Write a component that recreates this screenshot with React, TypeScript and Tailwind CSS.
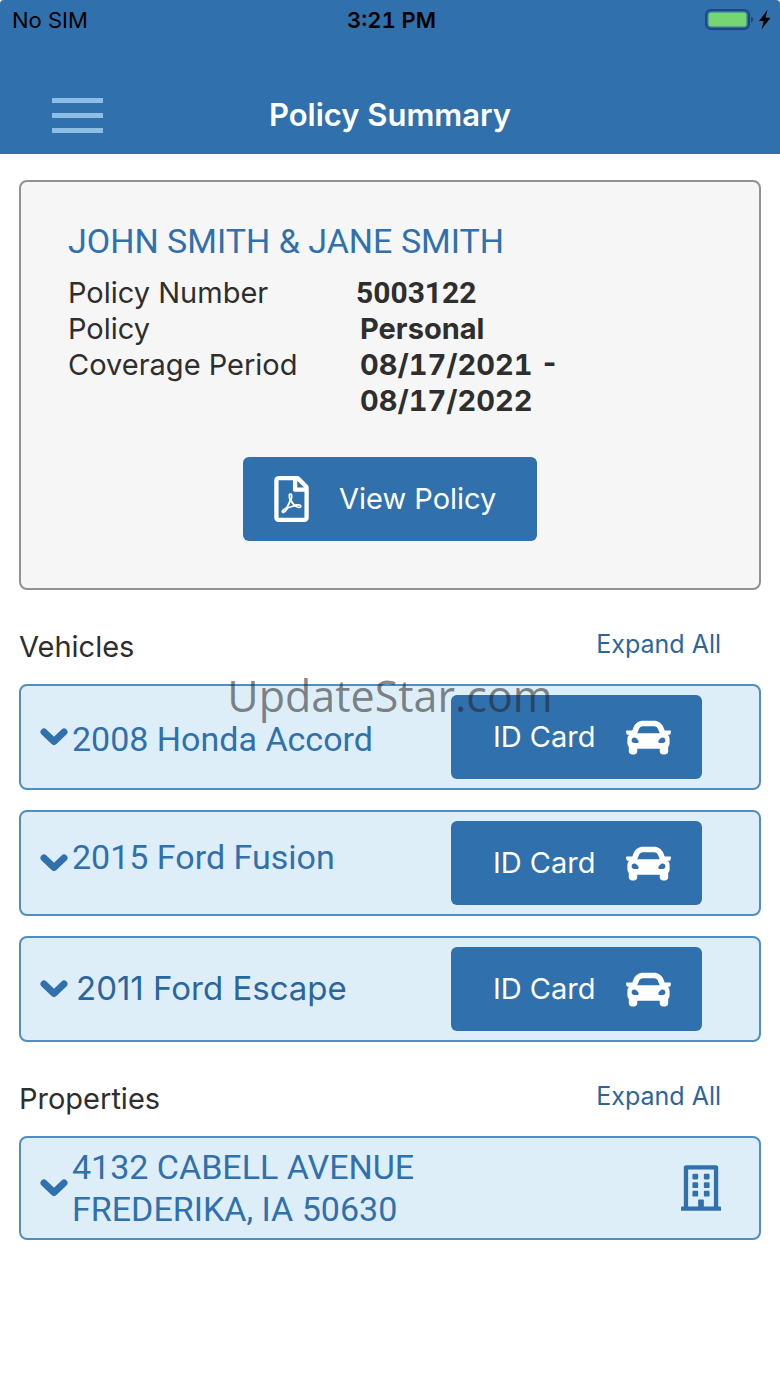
import { useState } from 'react';
import { FaCar, FaRegBuilding, FaRegFilePdf } from 'react-icons/fa';

interface Vehicle {
  id: number;
  name: string;
  nameClass: string;
}

const vehicles: Vehicle[] = [
  {
    id: 1,
    name: '2008 Honda Accord',
    nameClass: "pt-1 pl-1 font-['Roboto',sans-serif] text-[34px] text-[#3070ad]",
  },
  {
    id: 2,
    name: '2015 Ford Fusion',
    nameClass: "pb-3 pl-1 font-['Roboto',sans-serif] text-[34px] text-[#3070ad]",
  },
  { id: 3, name: '2011 Ford Escape', nameClass: 'pl-2 text-[33px] text-[#2a669e]' },
];

function Chevron() {
  return (
    <svg className="w-7 h-[18px] shrink-0" viewBox="0 0 28 18" fill="none" aria-hidden="true">
      <path
        d="M4 4 14 13.500 24 4"
        stroke="#3070ad"
        strokeWidth="7"
        strokeLinecap="round"
        strokeLinejoin="round"
      />
    </svg>
  );
}

function StatusBar() {
  return (
    <div className="flex items-center h-10 pl-3 pr-[9px] text-[22px] text-black">
      <span className="flex-1">No SIM</span>
      <span className="font-semibold tabular-nums">3:21 PM</span>
      <span className="flex flex-1 justify-end">
        <svg className="w-[66px] h-[22px]" viewBox="0 0 66 22" aria-label="Battery charging">
          <rect x="1" y="1" width="43" height="19" rx="5" fill="none" stroke="#1c4a78" strokeWidth="2" />
          <rect x="3.5" y="3.5" width="38" height="14" rx="2.5" fill="#76d672" />
          <path d="M46 7.500c3 1 3 5 0 6z" fill="#1c4a78" />
          <path d="M62.500 .8 54 12h4.700L56.500 20.500 65.500 8.800h-5z" fill="#000" />
        </svg>
      </span>
    </div>
  );
}

function Header() {
  return (
    <header className="bg-[#3070ad] rounded-t-sm h-[154px] flex flex-col justify-between">
      <StatusBar />
      <div className="grid grid-cols-[1fr_auto_1fr] items-center h-[78px] px-[52px]">
        <button type="button" aria-label="Menu" className="flex flex-col gap-[10px] w-[51px] cursor-pointer">
          <span className="h-[5px] bg-[#8dbfe6]" />
          <span className="h-[5px] bg-[#8dbfe6]" />
          <span className="h-[5px] bg-[#8dbfe6]" />
        </button>
        <h1 className="text-[31px] font-semibold text-white">Policy Summary</h1>
      </div>
    </header>
  );
}

function PolicyCard() {
  return (
    <section className="border-2 border-[#929292] rounded-lg bg-[#f6f6f6] pt-[39px] pb-[47px] px-[47px]">
      <h2 className="font-['Roboto',sans-serif] text-[34px] leading-10 text-[#3070ad]">
        JOHN SMITH &amp; JANE SMITH
      </h2>
      <dl className="grid grid-cols-[288px_204px] mt-[14px] text-[29px] leading-9 text-[#2e2e2e]">
        <dt>Policy Number</dt>
        <dd className="font-['Roboto',sans-serif] text-[30px] font-bold">5003122</dd>
        <dt>Policy</dt>
        <dd className="pl-1 font-bold">Personal</dd>
        <dt>Coverage Period</dt>
        <dd className="pl-1 font-bold tabular-nums">08/17/2021 - 08/17/2022</dd>
      </dl>
      <button
        type="button"
        className="flex items-center gap-[30px] w-[294px] h-[84px] mx-auto mt-[38px] pl-[31px] rounded-md bg-[#3070ad] text-[29px] text-white cursor-pointer"
      >
        <FaRegFilePdf className="w-[35px] h-[46px]" />
        View Policy
      </button>
    </section>
  );
}

function SectionHeader({ title, onExpand }: { title: string; onExpand: () => void }) {
  return (
    <div className="flex items-center justify-between h-[94px] pt-5 pr-10">
      <h2 className="text-[29px] text-[#2e2e2e]">{title}</h2>
      <button type="button" onClick={onExpand} className="pb-1 text-[25px] text-[#2a669e] cursor-pointer">
        Expand All
      </button>
    </div>
  );
}

function VehicleRow({ vehicle, open }: { vehicle: Vehicle; open: boolean }) {
  return (
    <li className="flex items-center justify-between h-[106px] border-2 border-[#4f8ebf] rounded-lg bg-[#deeef9] pl-[19px] pr-[57px]">
      <button type="button" aria-expanded={open} className="flex items-center cursor-pointer">
        <Chevron />
        <span className={vehicle.nameClass}>{vehicle.name}</span>
      </button>
      <button
        type="button"
        className="flex items-center justify-between w-[251px] h-[84px] pl-[42px] pr-[31px] rounded-md bg-[#3070ad] text-[29px] text-white cursor-pointer"
      >
        ID Card
        <FaCar className="w-[45px] h-[45px]" />
      </button>
    </li>
  );
}

function App() {
  const [vehiclesOpen, setVehiclesOpen] = useState(false);
  const [propertiesOpen, setPropertiesOpen] = useState(false);

  return (
    <div className="relative min-h-screen bg-white font-['Inter',sans-serif]">
      <Header />
      <main className="px-[19px] pt-[26px]">
        <PolicyCard />

        <SectionHeader title="Vehicles" onExpand={() => setVehiclesOpen(!vehiclesOpen)} />
        <ul className="flex flex-col gap-5">
          {vehicles.map((vehicle) => (
            <VehicleRow key={vehicle.id} vehicle={vehicle} open={vehiclesOpen} />
          ))}
        </ul>

        <SectionHeader title="Properties" onExpand={() => setPropertiesOpen(!propertiesOpen)} />
        <div className="flex items-center justify-between h-[104px] border-2 border-[#4f8ebf] rounded-lg bg-[#deeef9] pl-[19px] pr-[38px] text-[#3070ad]">
          <button
            type="button"
            aria-expanded={propertiesOpen}
            className="flex items-center gap-1 text-left font-['Roboto',sans-serif] text-[34px] leading-[42px] cursor-pointer"
          >
            <Chevron />
            <span>
              4132 CABELL AVENUE
              <br />
              FREDERIKA, IA 50630
            </span>
          </button>
          <FaRegBuilding className="w-10 h-[46px]" />
        </div>
      </main>

      <div className="absolute inset-x-0 top-[666px] text-center font-['Open_Sans',sans-serif] text-[43px] leading-[60px] text-[#222]/55 pointer-events-none">
        UpdateStar.com
      </div>
    </div>
  );
}

export default App;
